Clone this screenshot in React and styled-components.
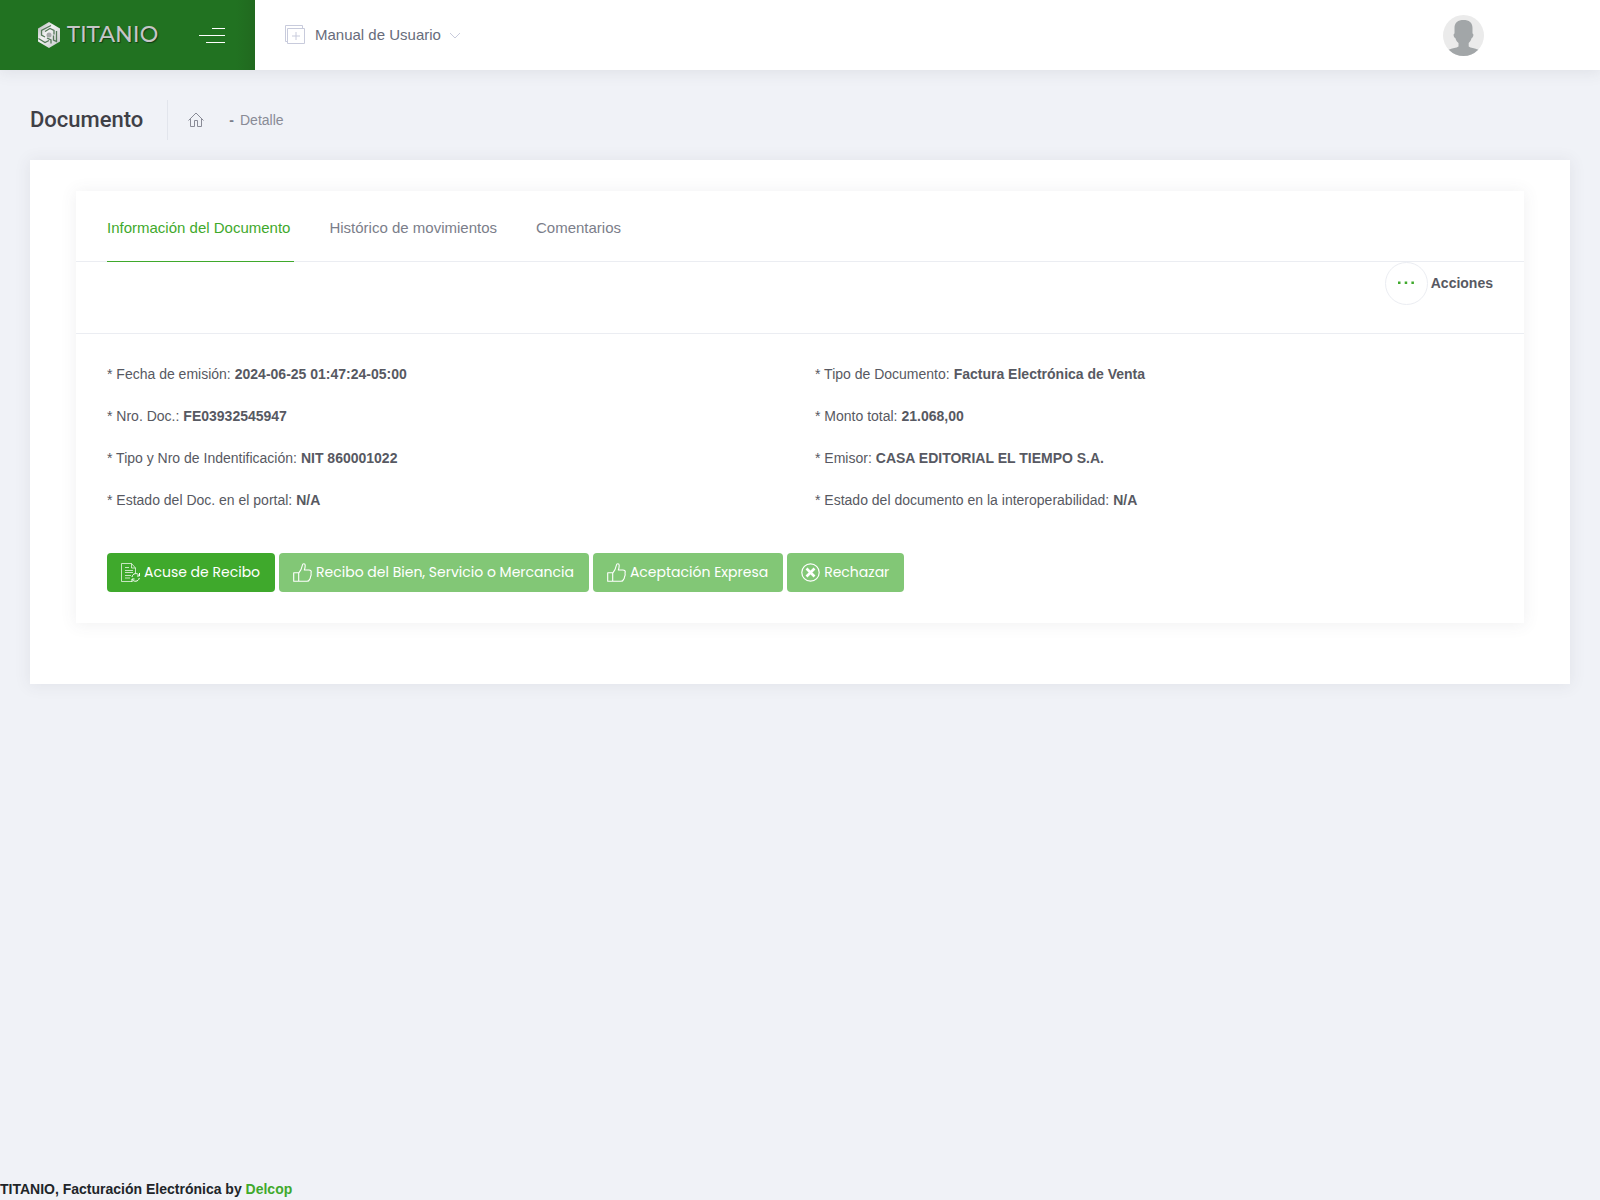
import React from "react";
import styled, { createGlobalStyle } from "styled-components";

const SANS = '"Liberation Sans", Arial, sans-serif';

const GlobalStyle = createGlobalStyle`
  *, *::before, *::after { box-sizing: border-box; }
  body { margin: 0; background: #f0f2f7; color: #575962; font: 400 14px/20px ${SANS}; }
  h1, ul, p, dl, dd { margin: 0; padding: 0; }
  a { color: inherit; text-decoration: none; }
  button { font: inherit; color: inherit; cursor: pointer; }
`;

const Page = styled.div`
  display: flex;
  flex-direction: column;
  min-height: 100vh;
`;

const Header = styled.header`
  display: flex;
  height: 70px;
  background: #fff;
  box-shadow: 0 1px 15px 1px rgba(69, 65, 78, 0.1);
`;

const Brand = styled.div`
  display: flex;
  align-items: center;
  justify-content: space-between;
  width: 255px;
  padding: 0 30px 0 37px;
  background: linear-gradient(to right, #217221 236px, #21691f);
`;

const LogoLink = styled.a`
  display: flex;
  align-items: center;
  gap: 6px;
  color: #c6c6c8;
`;

const LogoName = styled.span`
  font: 500 22px/28px Montserrat, Poppins, Lato, sans-serif;
  text-shadow: 1px 1px 1px #123d14;
`;

const MenuToggle = styled.button`
  display: flex;
  padding: 0;
  border: 0;
  background: none;
`;

const TopBar = styled.div`
  display: flex;
  flex: 1;
  align-items: center;
  justify-content: space-between;
  padding: 0 116px 0 30px;
`;

const ManualButton = styled.button`
  display: flex;
  align-items: center;
  padding: 0;
  border: 0;
  background: none;
  color: #676c7b;
  font-size: 15px;
  line-height: 20px;

  svg:first-child { margin-right: 10px; }
  svg:last-child { margin-left: 8px; }
`;

const ProfileLink = styled.a`
  display: flex;
`;

const SubHeader = styled.div`
  display: flex;
  align-items: center;
  padding: 30px 30px 20px;
`;

const Title = styled.h1`
  padding-right: 24px;
  border-right: 1px solid #e2e5ec;
  color: #3f4047;
  font: 500 22px/40px Roboto, sans-serif;
`;

const Crumbs = styled.nav`
  display: flex;
  align-items: center;
  padding-left: 20px;
  color: #898b96;

  a { display: flex; }
  b { margin: 0 6px 0 25px; color: #7b7e8a; }
`;

const Portlet = styled.main`
  margin: 0 30px;
  padding: 31px 46px 61px;
  background: #fff;
  box-shadow: 0 1px 15px 1px rgba(69, 65, 78, 0.08);
`;

const Panel = styled.section`
  background: #fff;
  box-shadow: 0 1px 15px 1px rgba(81, 77, 92, 0.08);
`;

const TabList = styled.div`
  display: flex;
  gap: 35px;
  height: 71px;
  padding: 0 31px;
  border-bottom: 1px solid #ebedf2;
`;

const Tab = styled.button`
  height: 71px;
  padding: 3px 4px 0 0;
  border: 0;
  border-bottom: 1px solid ${(p) => (p.$active ? "#3fa92c" : "transparent")};
  background: none;
  color: ${(p) => (p.$active ? "#3fa92c" : "#7b7e8a")};
  font-size: 15px;
`;

const Actions = styled.div`
  display: flex;
  justify-content: flex-end;
  align-items: flex-start;
  height: 72px;
  padding: 0 31px;
  border-bottom: 1px solid #ebedf2;
`;

const ActionsButton = styled.button`
  display: flex;
  align-items: center;
  gap: 3px;
  padding: 0;
  border: 0;
  background: none;
  font-weight: 700;
`;

const Label = styled.span`
  padding-bottom: 2px;
`;

const Dots = styled.span`
  display: flex;
  align-items: center;
  justify-content: center;
  width: 43px;
  height: 43px;
  border: 1px solid #ebedf2;
  border-radius: 50%;
`;

const PanelBody = styled.div`
  padding: 30px 31px 31px;
`;

const Fields = styled.dl`
  display: grid;
  grid-template-columns: 1fr 1fr;
  gap: 22px 30px;
`;

const FieldRow = styled.div`
  display: flex;
  gap: 4px;
  line-height: 20px;

  dd { font-weight: 700; }
`;

const ButtonRow = styled.div`
  display: flex;
  flex-wrap: wrap;
  gap: 4px;
  margin-top: 43px;
`;

const DocButton = styled.button`
  display: flex;
  align-items: center;
  gap: 4px;
  height: 39px;
  padding: 0 15px 0 14px;
  border: 0;
  border-radius: 4px;
  background: #3fa92c;
  color: #fff;
  font: 400 14px/20px Poppins, Inter, sans-serif;

  &:disabled { background: #82c776; cursor: default; }
`;

const Footer = styled.footer`
  margin-top: auto;
  color: #212529;
  font-weight: 700;
  line-height: 21px;

  a { color: #3fa92c; }
`;

const LogoMark = () => (
  <svg width="24" height="28" viewBox="0 0 24 28" aria-hidden="true">
    <defs>
      <linearGradient id="steel" x1="0" y1="0" x2="1" y2="1">
        <stop offset="0" stopColor="#a9abad" />
        <stop offset="0.4" stopColor="#f2f2f3" />
        <stop offset="1" stopColor="#c3c5c7" />
      </linearGradient>
    </defs>
    <path d="M12 1 23 7.500V20.500L12 27 1 20.500V7.500Z" fill="url(#steel)" />
    <path
      d="M14 4.500 4.500 9.500v4.500L8 16M8 10.500l5-3 4 2v4M1.500 17.500 8 21.500l4-2M19.500 10v10.500l-3-1.500v-4.500M10 17l4 2v3.500"
      fill="none"
      stroke="#56795a"
      strokeWidth="1.3"
    />
    <circle cx="12" cy="14" r="2.500" fill="#a5a8a9" />
  </svg>
);

const MenuIcon = () => (
  <svg width="26" height="16" viewBox="0 0 26 16" stroke="#fff" aria-hidden="true">
    <path d="M13 1.500h13M0 8.500h26M7 15.500h19" />
  </svg>
);

const ManualIcon = () => (
  <svg width="20" height="20" viewBox="0 0 20 20" fill="none" stroke="#c8cbdc" aria-hidden="true">
    <path d="M2.500 3.500h17v15h-17zM2 16.500H.5V.5h17V3M11 7v8M7 11h8" />
  </svg>
);

const ChevronIcon = () => (
  <svg width="12" height="8" viewBox="0 0 12 8" fill="none" stroke="#c8cbdc" aria-hidden="true">
    <path d="m1 2 5 5 5-5" />
  </svg>
);

const Avatar = () => (
  <svg width="41" height="41" viewBox="0 0 41 41" aria-hidden="true">
    <clipPath id="avatar-disc"><circle cx="20.500" cy="20.500" r="20.500" /></clipPath>
    <g clipPath="url(#avatar-disc)">
      <path fill="#ebebeb" d="M0 0h41v41H0z" />
      <path
        fill="#a2a6a8"
        d="M20.500 5c5.500 0 9 2.500 9 8v5.500c1.500 0 1 4-.8 4.500-.7 2.300-1.700 4-3 5v3.500c2 1.500 5.500 1.500 10.300 3.500V41H5v-6c4.500-2 8.500-2 10.500-3.500V28c-1.500-1-2.500-2.700-3.200-5-1.800-.5-2.300-4.500-.8-4.500V13c0-5.500 3.500-8 9-8Z"
      />
    </g>
  </svg>
);

const HomeIcon = () => (
  <svg width="16" height="16" viewBox="0 0 16 16" fill="none" stroke="#898b96" aria-hidden="true">
    <path d="M.5 8.500 8 1l7.500 7.500M2.500 7v7.500h4v-6h3v6h4V7" />
  </svg>
);

const DotsIcon = () => (
  <svg width="16" height="5" viewBox="0 0 16 5" fill="#3fa92c" aria-hidden="true">
    <path d="M0 .5h2.500V3H0zM6.700.5h2.500V3H6.700zM13.400.5h2.500V3h-2.500z" />
  </svg>
);

const DocumentIcon = () => (
  <svg width="19" height="19" viewBox="0 0 19 19" fill="none" stroke="#fff" strokeWidth=".7" aria-hidden="true">
    <path d="M11 18.500H.5V.5h10L14.500 5v5M10.500.5V5h4M4 4.500h4M4 7.500h8M4 9.500h8M4 12.500h6M4 15h5" />
    <path d="M11 14c.5-4 5.500-4.500 7-1.500M18.500 10v3H16M18.300 15c-.8 4-5.800 4-7 1.500M11 19v-3h2.500" strokeWidth="1" />
  </svg>
);

const ThumbIcon = () => (
  <svg width="19" height="19" viewBox="0 0 19 19" fill="none" stroke="#fff" strokeLinejoin="round" aria-hidden="true">
    <path d="M.7 9.700h5v8.600h-5zM5.700 10.200C7.500 8 8.700 6 9.300 2.500 9.600.2 12.200.2 12.200 2.500c0 1.800-.4 3.200-.9 4.500h4.500c2.200 0 2.800 1.300 2.200 3 .3 1.500.2 2.700-.5 3.700 0 1.200-.4 2.200-1 2.800-.4 1.300-1.200 1.800-2.500 1.800H5.700" strokeWidth="1.100" />
  </svg>
);

const RejectIcon = () => (
  <svg width="19" height="19" viewBox="0 0 19 19" fill="none" stroke="#fff" aria-hidden="true">
    <circle cx="9.500" cy="9.500" r="8.700" strokeWidth="1.200" />
    <path d="m5.500 5.500 8 8m0-8-8 8" strokeWidth="2.600" />
  </svg>
);

const tabs = ["Información del Documento", "Histórico de movimientos", "Comentarios"];

const fields = [
  ["Fecha de emisión", "2024-06-25 01:47:24-05:00"],
  ["Tipo de Documento", "Factura Electrónica de Venta"],
  ["Nro. Doc.", "FE03932545947"],
  ["Monto total", "21.068,00"],
  ["Tipo y Nro de Indentificación", "NIT 860001022"],
  ["Emisor", "CASA EDITORIAL EL TIEMPO S.A."],
  ["Estado del Doc. en el portal", "N/A"],
  ["Estado del documento en la interoperabilidad", "N/A"],
];

const docActions = [
  { label: "Acuse de Recibo", Icon: DocumentIcon, enabled: true },
  { label: "Recibo del Bien, Servicio o Mercancia", Icon: ThumbIcon },
  { label: "Aceptación Expresa", Icon: ThumbIcon },
  { label: "Rechazar", Icon: RejectIcon },
];

export default function App() {
  return (
    <Page>
      <GlobalStyle />
      <Header>
        <Brand>
          <LogoLink href="#">
            <LogoMark />
            <LogoName>TITANIO</LogoName>
          </LogoLink>
          <MenuToggle aria-label="Menú"><MenuIcon /></MenuToggle>
        </Brand>
        <TopBar>
          <ManualButton>
            <ManualIcon />
            Manual de Usuario
            <ChevronIcon />
          </ManualButton>
          <ProfileLink href="#" aria-label="Perfil"><Avatar /></ProfileLink>
        </TopBar>
      </Header>
      <SubHeader>
        <Title>Documento</Title>
        <Crumbs>
          <a href="#" aria-label="Inicio"><HomeIcon /></a>
          <b>-</b>
          <a href="#">Detalle</a>
        </Crumbs>
      </SubHeader>
      <Portlet>
        <Panel>
          <TabList role="tablist">
            {tabs.map((label, i) => (
              <Tab key={label} role="tab" aria-selected={i === 0} $active={i === 0}>{label}</Tab>
            ))}
          </TabList>
          <Actions>
            <ActionsButton>
              <Dots><DotsIcon /></Dots>
              <Label>Acciones</Label>
            </ActionsButton>
          </Actions>
          <PanelBody>
            <Fields>
              {fields.map(([label, value]) => (
                <FieldRow key={label}>
                  <dt>* {label}:</dt>
                  <dd>{value}</dd>
                </FieldRow>
              ))}
            </Fields>
            <ButtonRow>
              {docActions.map(({ label, Icon, enabled }) => (
                <DocButton key={label} disabled={!enabled}>
                  <Icon />
                  <Label>{label}</Label>
                </DocButton>
              ))}
            </ButtonRow>
          </PanelBody>
        </Panel>
      </Portlet>
      <Footer>TITANIO, Facturación Electrónica by <a href="#">Delcop</a></Footer>
    </Page>
  );
}
